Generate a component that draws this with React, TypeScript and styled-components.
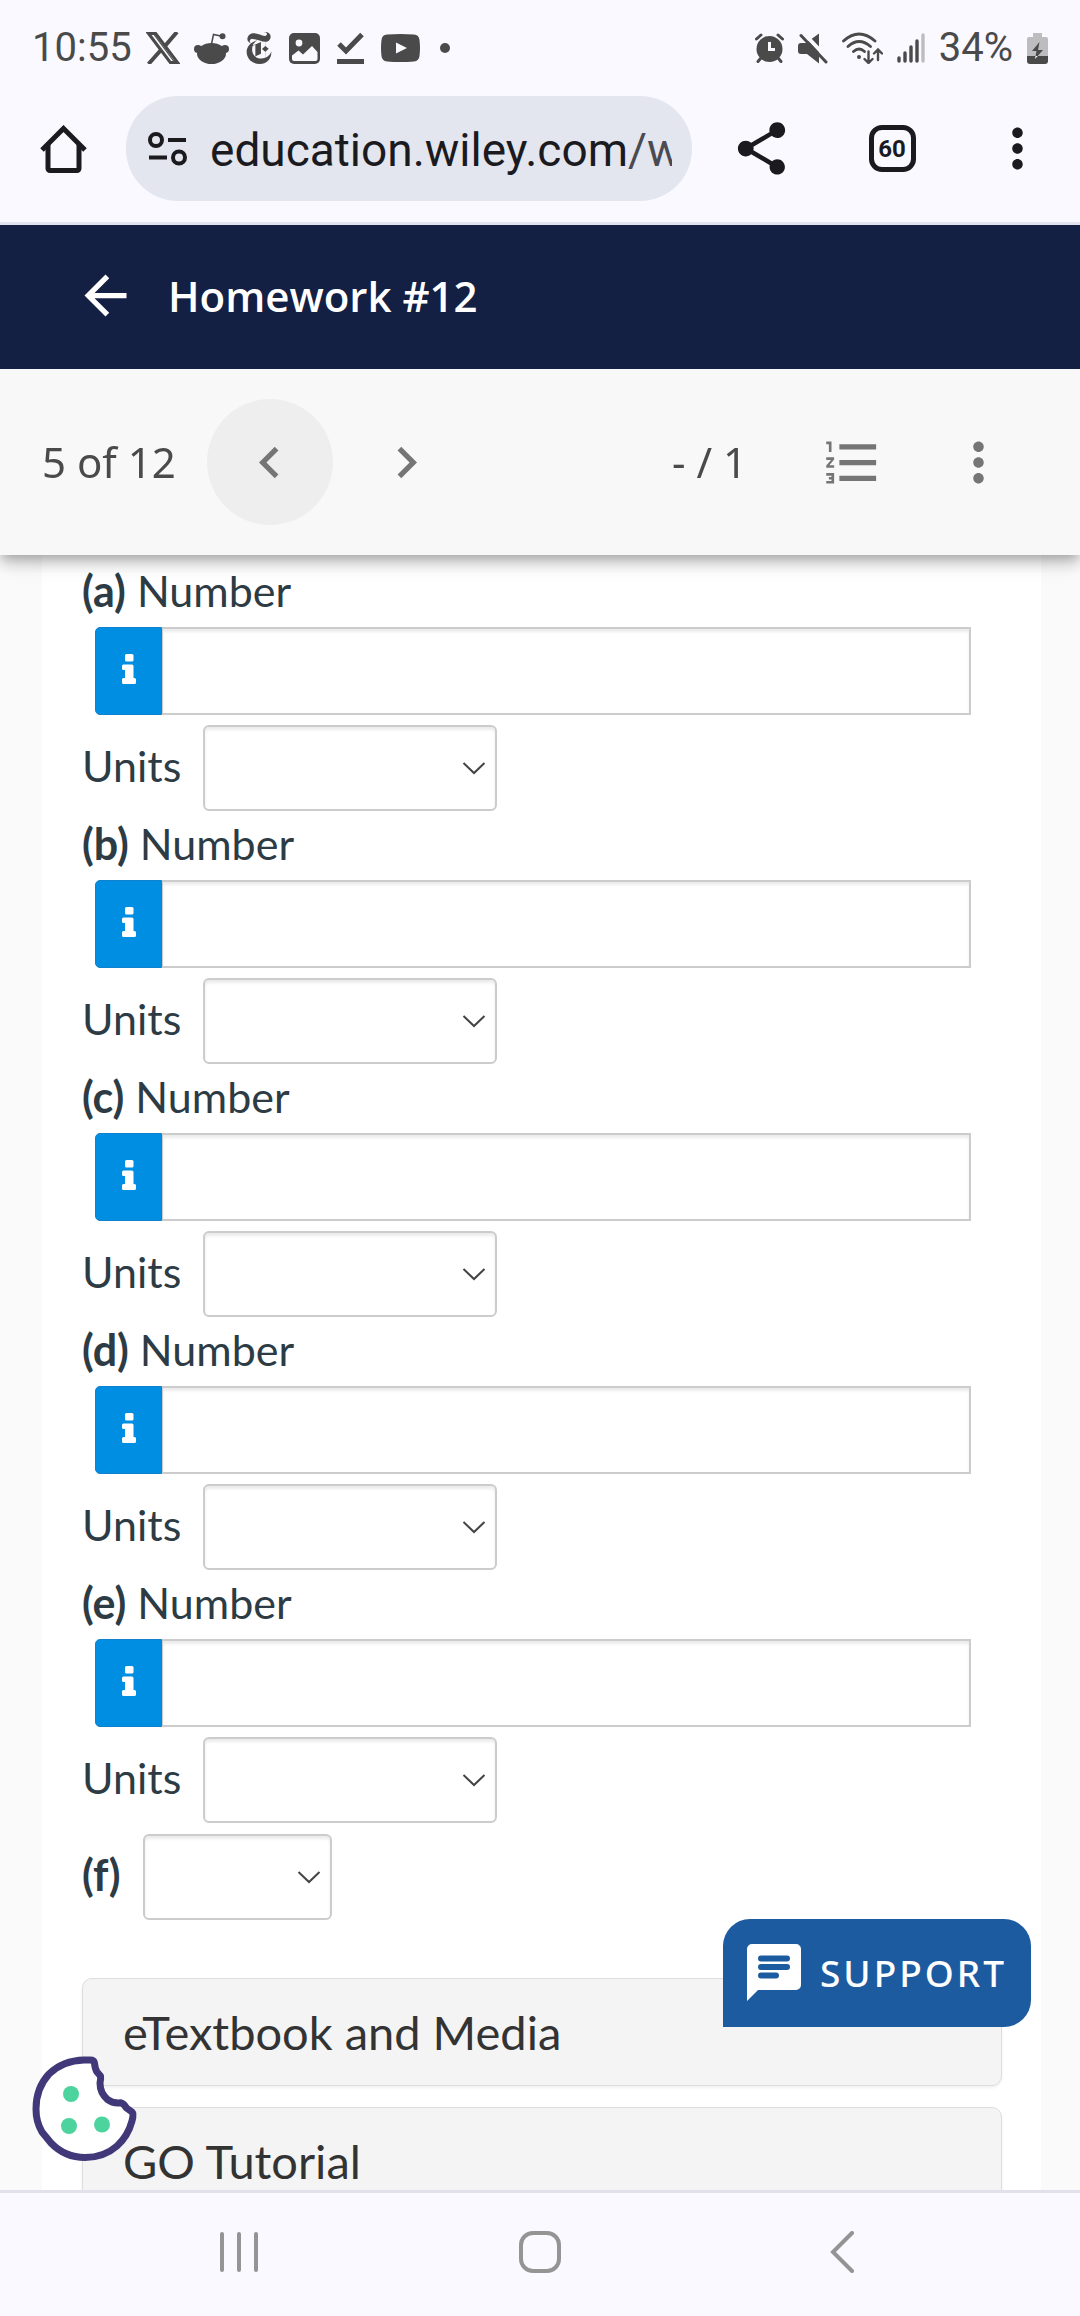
import React from "react";
import styled, { createGlobalStyle } from "styled-components";
import { SiNewyorktimes } from "react-icons/si";
import {
  MdArrowBack,
  MdChevronLeft,
  MdChevronRight,
  MdFormatListNumbered,
  MdMoreVert,
  MdShare,
} from "react-icons/md";

const GlobalStyle = createGlobalStyle`
  *, *::before, *::after { box-sizing: border-box; }
  body { margin: 0; background: #faf9ff; }
  button, input, select { font: inherit; color: inherit; }
`;

const Screen = styled.div`
  display: flex;
  flex-direction: column;
  height: 100vh;
  background: #faf9ff;
`;

const StatusBar = styled.div`
  display: flex;
  align-items: center;
  justify-content: space-between;
  flex: none;
  height: 96px;
  padding: 0 32px;
  color: #4a4a4a;
  font-family: Roboto, sans-serif;
  font-size: 40px;
  line-height: 48px;
`;

const StatusGroup = styled.div`
  display: flex;
  align-items: center;
  gap: 14px;
  svg { display: block; }
`;

const BrowserBar = styled.div`
  display: flex;
  align-items: center;
  flex: none;
  height: 129px;
  padding: 0 3px 21px 0;
  border-bottom: 3px solid #e1e3ee;
  color: #1b1b1f;
`;

const BarButton = styled.button<{ $width: number }>`
  display: flex;
  align-items: center;
  justify-content: center;
  flex: none;
  width: ${(p) => p.$width}px;
  height: 105px;
  padding: 0;
  border: 0;
  background: none;
`;

const AddressBar = styled.div`
  display: flex;
  align-items: center;
  flex: 1;
  min-width: 0;
  height: 105px;
  margin-right: 3px;
  padding: 0 20px 0 22px;
  border-radius: 52px;
  background: #e3e6ef;
`;

const Address = styled.a`
  flex: 1;
  min-width: 0;
  margin-left: 23px;
  padding-top: 3px;
  overflow: hidden;
  white-space: nowrap;
  color: #1b1b1f;
  text-decoration: none;
  font-family: Roboto, sans-serif;
  font-size: 46px;
  line-height: 60px;
  span { color: #4a4b52; }
`;

const TabCount = styled.span`
  display: flex;
  align-items: center;
  justify-content: center;
  width: 47px;
  height: 47px;
  border: 5px solid #1b1b1f;
  border-radius: 13px;
  font-family: Roboto, sans-serif;
  font-size: 24px;
  font-weight: 700;
`;

const Header = styled.header`
  display: flex;
  align-items: center;
  gap: 31px;
  height: 144px;
  flex: none;
  padding: 0 74px 3px;
  background: #141f44;
  color: #fff;
`;

const IconButton = styled.button`
  display: flex;
  flex: none;
  padding: 0;
  border: 0;
  background: none;
`;

const Title = styled.h1`
  margin: 0;
  font-family: "Open Sans", "Noto Sans", sans-serif;
  font-size: 42px;
  font-weight: 600;
  line-height: 60px;
`;

const Toolbar = styled.div`
  position: relative;
  z-index: 1;
  display: flex;
  align-items: center;
  flex: none;
  height: 186px;
  padding: 0 39px 0 42px;
  background: #f8f8f8;
  box-shadow: 0 5px 10px -3px rgba(0, 0, 0, 0.2), 0 10px 13px rgba(0, 0, 0, 0.14),
    0 3px 26px rgba(0, 0, 0, 0.12);
  clip-path: inset(0 0 -40px 0);
  color: #4a4a4a;
  font-family: "Noto Sans", sans-serif;
  font-size: 42px;
  line-height: 60px;
`;

const RoundButton = styled.button<{ $active?: boolean }>`
  display: flex;
  align-items: center;
  justify-content: center;
  flex: none;
  width: 126px;
  height: 126px;
  padding: 0;
  border: 0;
  border-radius: 50%;
  background: ${(p) => (p.$active ? "#eee" : "none")};
  color: #757575;
`;

const Pager = styled.div`
  display: flex;
  gap: 11px;
  margin-left: 31px;
`;

const Score = styled.span`
  margin: 0 42px 0 auto;
`;

const Stage = styled.div`
  position: relative;
  flex: 1;
  min-height: 0;
`;

const Scroller = styled.main`
  height: 100%;
  overflow-y: auto;
  scrollbar-width: none;
  padding: 0 39px 0 42px;
  background: #fafafa;
`;

const Card = styled.div`
  padding: 3px 39px 40px 40px;
  background: #fff;
  color: #2d3b45;
  font-family: Lato, sans-serif;
  font-size: 43px;
  line-height: 60px;
`;

const PartLabel = styled.label`
  display: block;
  padding: 3px 0 6px;
`;

const NumberGroup = styled.div`
  display: flex;
  height: 88px;
  margin: 0 31px 10px 13px;
`;

const InfoButton = styled.button`
  display: flex;
  align-items: center;
  justify-content: center;
  width: 67px;
  padding: 0 0 5px;
  border: 1px solid #1181cc;
  border-radius: 5px 0 0 5px;
  background: #008ee2;
  color: #fff;
`;

const NumberInput = styled.input`
  flex: 1;
  min-width: 0;
  padding: 0 16px;
  border: 2px solid #ccc;
  border-left-width: 1px;
  border-radius: 0;
  outline: 0;
  background: #fff;
  box-shadow: inset 0 3px 3px rgba(0, 0, 0, 0.08);
`;

const SelectRow = styled.div`
  display: flex;
  align-items: center;
  gap: 22px;
  > label { padding-bottom: 4px; }
`;

const SelectBox = styled.div<{ $width: number }>`
  display: grid;
  width: ${(p) => p.$width}px;
  height: 86px;
  align-items: center;
  > * { grid-area: 1 / 1; }
  svg { justify-self: end; margin-right: 11px; pointer-events: none; }
`;

const Select = styled.select`
  appearance: none;
  width: 100%;
  height: 100%;
  padding: 0 50px 0 16px;
  border: 2px solid #ccc;
  border-radius: 6px;
  background: #fff;
  box-shadow: inset 0 3px 3px rgba(0, 0, 0, 0.08);
`;

const LastPart = styled.div`
  margin: 11px 0 58px;
`;

const Panel = styled.button`
  display: flex;
  align-items: center;
  width: 100%;
  height: 108px;
  margin-bottom: 21px;
  padding: 0 40px;
  border: 1px solid #ddd;
  border-radius: 10px;
  background: #f4f4f4;
  box-shadow: 0 2px 3px rgba(0, 0, 0, 0.06);
  color: #333;
  font-size: 47px;
  line-height: 60px;
`;

const SupportButton = styled.button`
  position: absolute;
  right: 49px;
  bottom: 163px;
  display: flex;
  align-items: center;
  gap: 19px;
  height: 108px;
  padding: 0 24px 2px;
  border: 0;
  border-radius: 27px 27px 27px 0;
  background: #1c5b9f;
  color: #fff;
  font-family: "Noto Sans", sans-serif;
  font-size: 37px;
  font-weight: 500;
  letter-spacing: 3px;
`;

const CookieButton = styled(IconButton)`
  position: absolute;
  left: 32px;
  bottom: 28px;
`;

const NavBar = styled.nav`
  display: flex;
  flex: none;
  justify-content: space-evenly;
  align-items: center;
  height: 126px;
  padding: 0 12px 6px;
  border-top: 3px solid #e1e1ec;
  color: #949494;
`;

const NavButton = styled.button`
  display: flex;
  align-items: center;
  justify-content: center;
  width: 150px;
  height: 100px;
  padding: 0;
  border: 0;
  background: none;
  color: inherit;
`;

const XLogo = () => (
  <svg width="34" height="32" viewBox="0 0 34 32" fill="none" stroke="currentColor">
    <path d="M2.500 1.500h7.200L31.500 30.500h-7.200z" strokeWidth="3" />
    <path d="M31 0 19 14M14.500 18.500 2.500 32" strokeWidth="4" />
    <path d="M8 2.500 28 29.500" strokeWidth="1.200" />
  </svg>
);

const RedditIcon = () => (
  <svg width="35" height="31" viewBox="0 0 35 31" fill="currentColor">
    <ellipse cx="17.500" cy="20.500" rx="14.500" ry="10.500" />
    <circle cx="4" cy="16" r="4" />
    <circle cx="31" cy="16" r="4" />
    <path d="M17.500 11 19.500 1.500 28 3.200" fill="none" stroke="currentColor" strokeWidth="1.500" />
    <circle cx="28.500" cy="3.200" r="3" />
  </svg>
);

const PictureIcon = () => (
  <svg width="31" height="31" viewBox="0 0 31 31">
    <rect width="31" height="31" rx="5" fill="#4a4a4a" />
    <circle cx="10" cy="10" r="3.400" fill="#faf9ff" />
    <path d="M3 22.500 9.500 17.500l4.500 4L23 13l5.500 6V26a2 2 0 0 1-2 2H5a2 2 0 0 1-2-2z" fill="#faf9ff" />
  </svg>
);

const CheckIcon = () => (
  <svg width="33" height="33" viewBox="-3 0 33 33" fill="none" stroke="currentColor" strokeWidth="5">
    <path d="M2 12l7 7L25 2.500" />
    <path d="M0 29.500h27" />
  </svg>
);

const YoutubeIcon = () => (
  <svg width="39" height="28" viewBox="0 0 39 28">
    <path d="M6 .6Q19.500-.6 33 .6 38 1 38.500 6 39.500 14 38.500 22 38 27 33 27.400 19.500 28.600 6 27.400 1 27 .5 22-.5 14 .5 6 1 1 6 .6z" fill="#4a4a4a" />
    <path d="M15 8.500v11l11-5.500z" fill="#faf9ff" />
  </svg>
);

const DotIcon = () => (
  <svg width="22" height="10" viewBox="0 0 22 10">
    <circle cx="11" cy="5" r="5" fill="currentColor" />
  </svg>
);

const AlarmIcon = () => (
  <svg width="29" height="30" viewBox="0 0 29 30" fill="none" stroke="currentColor" strokeWidth="3" strokeLinecap="round">
    <circle cx="14.500" cy="16" r="13" fill="currentColor" stroke="none" />
    <path d="M1.500 6l4.500-4M27.500 6L23 2M5.500 25.500l-2.500 3M23.500 25.500l2.500 3" />
    <path d="M14.500 9v7.500h5.500" stroke="#faf9ff" strokeLinecap="butt" />
  </svg>
);

const MuteIcon = () => (
  <svg width="30" height="31" viewBox="0 0 30 31">
    <path d="M3 10h5L21 0.500V30.500L9 21H3a3 3 0 0 1-3-3v-5a3 3 0 0 1 3-3z" fill="#4a4a4a" />
    <path d="M5.500 0 31 27" stroke="#faf9ff" strokeWidth="4" />
    <path d="M3 2.500 28 29" stroke="#4a4a4a" strokeWidth="3" strokeLinecap="round" />
  </svg>
);

const WifiIcon = () => (
  <svg width="41" height="32" viewBox="0 0 41 32" fill="none" stroke="currentColor" strokeWidth="2.800" strokeLinecap="round">
    <path d="M1.500 9Q17 -5 33 9M6 14.500q11-10 22.500 0M11.500 19.500q5.500-5 11 0" />
    <circle cx="17" cy="25" r="2" fill="currentColor" stroke="none" />
    <path d="M26.500 19.500V31M22.500 27l4 4 4-4M36 28V18M32 21.500l4-4 4 4" strokeWidth="2.400" />
  </svg>
);

const SignalIcon = () => (
  <svg width="28" height="30" viewBox="0 0 28 30" fill="none" stroke="#4a4a4a" strokeWidth="3.400" strokeLinecap="round">
    <path d="M2 25v3M8 20v8M14 14v14M20 8v20" />
    <path d="M26 2v26" stroke="#bdbdc0" />
  </svg>
);

const BatteryIcon = () => (
  <svg width="21" height="31" viewBox="0 0 21 31">
    <path d="M6 0h9v4h4a2 2 0 0 1 2 2v17H0V6a2 2 0 0 1 2-2h4z" fill="#bdbdc0" />
    <path d="M0 23h21v5a3 3 0 0 1-3 3H3a3 3 0 0 1-3-3z" fill="#4a4a4a" />
    <path d="M12.500 9 5 18h4.500L8 26l8-9h-5z" fill="#4a4a4a" />
    <path d="M8.600 23h2.200L8 26z" fill="#faf9ff" />
  </svg>
);

const HomeIcon = () => (
  <svg width="47" height="48" viewBox="0 0 47 48" fill="none" stroke="currentColor" strokeWidth="5" strokeLinejoin="round">
    <path d="M8 19v24.500a2 2 0 0 0 2 2h27a2 2 0 0 0 2-2V19" />
    <path d="M2 25 23.500 3.500 45 25" strokeLinejoin="miter" />
  </svg>
);

const SiteInfoIcon = () => (
  <svg width="39" height="34" viewBox="0 0 39 34" fill="none" stroke="currentColor" strokeWidth="4">
    <circle cx="8" cy="8" r="6" />
    <path d="M20 8h18M1 25.500h18" />
    <circle cx="31" cy="25.500" r="6" />
  </svg>
);

const InfoIcon = () => (
  <svg width="14" height="30" viewBox="0 0 14 30" fill="currentColor">
    <rect x="3" y="0" width="8.500" height="7.500" rx="1.500" />
    <path d="M1.500 10.500H10a1.500 1.500 0 0 1 1.500 1.500v12h1A1.500 1.500 0 0 1 14 25.500v3a1.500 1.500 0 0 1-1.500 1.500h-11A1.500 1.500 0 0 1 0 28.500v-3A1.500 1.500 0 0 1 1.500 24H3v-8H1.500A1.500 1.500 0 0 1 0 14.500V12a1.500 1.500 0 0 1 1.500-1.500z" />
  </svg>
);

const ChevronIcon = () => (
  <svg width="24" height="14" viewBox="0 0 24 14" fill="none" stroke="#444" strokeWidth="2">
    <path d="M1.500 2 12 12 22.500 2" />
  </svg>
);

const ChatIcon = () => (
  <svg width="54" height="57" viewBox="0 0 54 57">
    <path d="M5 0h44a5 5 0 0 1 5 5v36a5 5 0 0 1-5 5H11L0 57V5a5 5 0 0 1 5-5z" fill="#fff" />
    <path d="M14 14.500h26M14 23h26M14 31.500h15" stroke="#1c5b9f" strokeWidth="6" strokeLinecap="round" />
  </svg>
);

const CookieIcon = () => (
  <svg width="106" height="106" viewBox="0 0 106 106">
    <path
      d="M52 4H58q4 0 4.500 3 .5 6 2.500 9l3.500 4q.5 3-.5 7 0 10 7.500 16.500 5 4 13 3.300 3 .5 6 5.200l5.500 4q2 2 0 9Q96 80 85 90 72 101.500 53 101.500 33 101.500 19 87L10 76Q4 66 4 53 4 32 17 18 31 4.500 52 4z"
      fill="#fff" stroke="#403878" strokeWidth="7" strokeLinejoin="round"
    />
    <circle cx="39" cy="38" r="8" fill="#4dd39d" />
    <circle cx="37" cy="70" r="8" fill="#4dd39d" />
    <circle cx="70" cy="68.500" r="8" fill="#4dd39d" />
  </svg>
);

const parts = ["a", "b", "c", "d", "e"];

export default function App() {
  return (
    <Screen>
      <GlobalStyle />
      <StatusBar>
        <StatusGroup>
          <span>10:55</span>
          <XLogo />
          <RedditIcon />
          <SiNewyorktimes size={32} />
          <PictureIcon />
          <CheckIcon />
          <YoutubeIcon />
          <DotIcon />
        </StatusGroup>
        <StatusGroup>
          <AlarmIcon />
          <MuteIcon />
          <WifiIcon />
          <SignalIcon />
          <span>34%</span>
          <BatteryIcon />
        </StatusGroup>
      </StatusBar>

      <BrowserBar>
        <BarButton $width={126} aria-label="Home"><HomeIcon /></BarButton>
        <AddressBar>
          <SiteInfoIcon />
          <Address href="#">education.wiley.com<span>/w</span></Address>
        </AddressBar>
        <BarButton $width={132} aria-label="Share"><MdShare size={63} /></BarButton>
        <BarButton $width={130} aria-label="Tabs"><TabCount>60</TabCount></BarButton>
        <BarButton $width={120} aria-label="Menu"><MdMoreVert size={63} /></BarButton>
      </BrowserBar>

      <Header>
        <IconButton aria-label="Back"><MdArrowBack size={63} color="#fff" /></IconButton>
        <Title>Homework #12</Title>
      </Header>

      <Toolbar>
        <span>5 of 12</span>
        <Pager>
          <RoundButton $active aria-label="Previous question"><MdChevronLeft size={63} /></RoundButton>
          <RoundButton aria-label="Next question"><MdChevronRight size={63} /></RoundButton>
        </Pager>
        <Score>- / 1</Score>
        <RoundButton aria-label="Question list"><MdFormatListNumbered size={63} /></RoundButton>
        <RoundButton aria-label="More options"><MdMoreVert size={63} /></RoundButton>
      </Toolbar>

      <Stage>
        <Scroller>
          <Card>
            {parts.map((part) => (
              <section key={part}>
                <PartLabel htmlFor={`number-${part}`}><b>({part})</b> Number</PartLabel>
                <NumberGroup>
                  <InfoButton aria-label="Input help"><InfoIcon /></InfoButton>
                  <NumberInput id={`number-${part}`} type="text" inputMode="decimal" />
                </NumberGroup>
                <SelectRow>
                  <label htmlFor={`units-${part}`}>Units</label>
                  <SelectBox $width={294}>
                    <Select id={`units-${part}`} />
                    <ChevronIcon />
                  </SelectBox>
                </SelectRow>
              </section>
            ))}
            <LastPart>
              <SelectRow>
                <label htmlFor="answer-f"><b>(f)</b></label>
                <SelectBox $width={189}>
                  <Select id="answer-f" />
                  <ChevronIcon />
                </SelectBox>
              </SelectRow>
            </LastPart>
            <Panel>eTextbook and Media</Panel>
            <Panel>GO Tutorial</Panel>
          </Card>
        </Scroller>
        <SupportButton><ChatIcon />SUPPORT</SupportButton>
        <CookieButton aria-label="Cookie settings"><CookieIcon /></CookieButton>
      </Stage>

      <NavBar>
        <NavButton aria-label="Recent apps">
          <svg width="38" height="40" viewBox="0 0 38 40" stroke="currentColor" strokeWidth="4" strokeLinecap="round">
            <path d="M2 2v36M19 2v36M36 2v36" />
          </svg>
        </NavButton>
        <NavButton aria-label="Home screen">
          <svg width="42" height="42" viewBox="0 0 42 42" fill="none" stroke="currentColor" strokeWidth="4">
            <rect x="2" y="2" width="38" height="38" rx="12" />
          </svg>
        </NavButton>
        <NavButton aria-label="Go back">
          <svg width="24" height="42" viewBox="0 0 24 42" fill="none" stroke="currentColor" strokeWidth="4" strokeLinecap="round">
            <path d="M22 2 3 21l19 19" />
          </svg>
        </NavButton>
      </NavBar>
    </Screen>
  );
}
